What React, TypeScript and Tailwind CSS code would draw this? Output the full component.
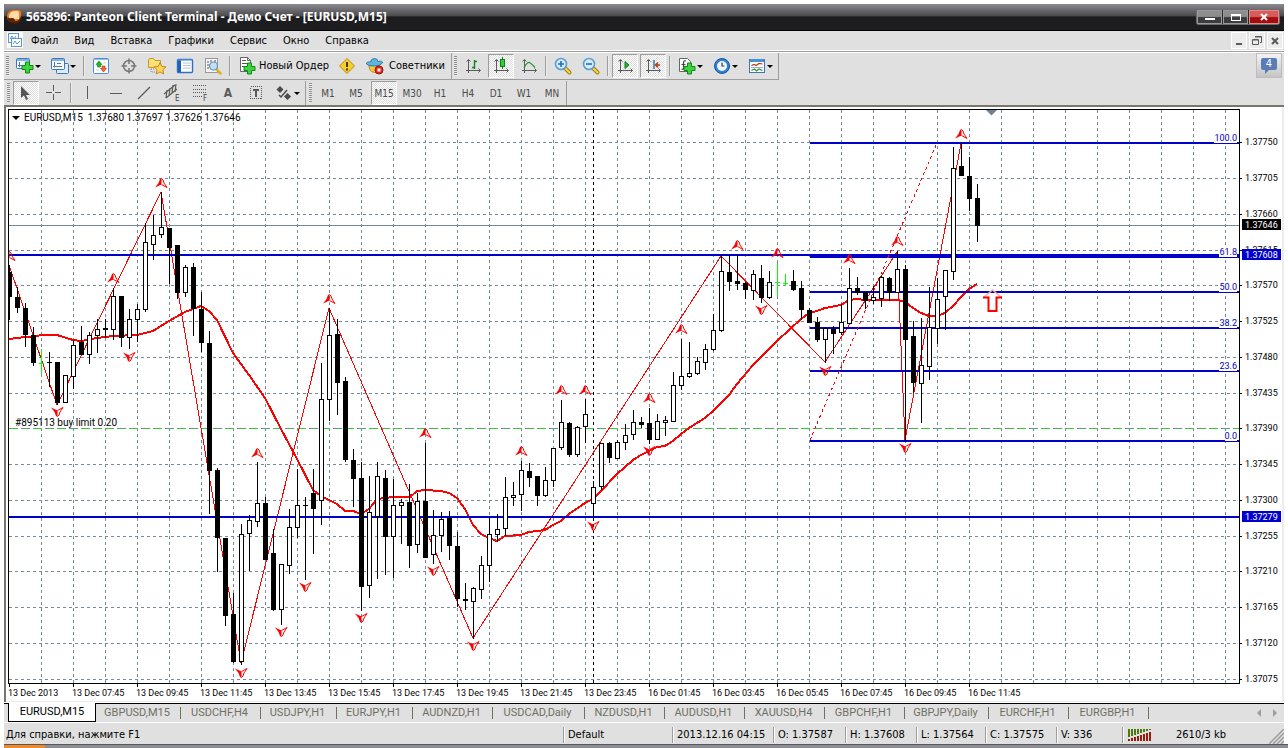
import type { ReactNode } from "react";

type Candle = [x: number, high: number, top: number, bottom: number, low: number, kind: "w" | "b" | "g"];

// pixel rows of one price bar: wick top, body top, body bottom, wick bottom
const candles: Candle[] = [
  [9, 265, 272, 297, 320, "b"],
  [17, 287, 297, 308, 313, "b"],
  [25, 303, 308, 335, 347, "b"],
  [33, 327, 335, 363, 366, "b"],
  [41, 349, 363, 364, 374, "g"],
  [49, 352, 362, 363, 387, "b"],
  [57, 362, 362, 403, 405, "b"],
  [65, 375, 375, 403, 403, "w"],
  [73, 340, 345, 377, 389, "w"],
  [81, 326, 342, 355, 355, "b"],
  [89, 332, 335, 355, 364, "w"],
  [97, 319, 329, 336, 353, "w"],
  [105, 319, 328, 330, 338, "b"],
  [113, 288, 296, 330, 340, "w"],
  [121, 296, 296, 338, 347, "b"],
  [129, 309, 319, 338, 349, "w"],
  [137, 304, 309, 320, 342, "w"],
  [145, 223, 242, 310, 312, "w"],
  [153, 215, 235, 245, 260, "w"],
  [161, 192, 227, 235, 238, "w"],
  [169, 228, 228, 248, 284, "b"],
  [177, 245, 245, 293, 299, "b"],
  [185, 265, 267, 293, 297, "w"],
  [193, 263, 267, 309, 336, "b"],
  [201, 292, 309, 343, 352, "b"],
  [209, 331, 343, 471, 514, "b"],
  [217, 468, 470, 538, 572, "b"],
  [225, 538, 538, 616, 626, "b"],
  [233, 593, 614, 662, 663, "b"],
  [241, 524, 534, 662, 665, "w"],
  [249, 515, 520, 534, 571, "w"],
  [257, 462, 503, 522, 527, "w"],
  [265, 497, 503, 560, 560, "b"],
  [273, 529, 553, 610, 611, "b"],
  [281, 564, 564, 610, 625, "w"],
  [289, 509, 527, 566, 574, "w"],
  [297, 469, 505, 528, 538, "w"],
  [305, 497, 505, 506, 580, "b"],
  [313, 469, 493, 509, 554, "b"],
  [321, 363, 399, 501, 525, "w"],
  [329, 308, 335, 400, 421, "w"],
  [337, 319, 334, 383, 415, "b"],
  [345, 377, 381, 460, 462, "b"],
  [353, 449, 460, 479, 507, "b"],
  [361, 462, 478, 587, 611, "b"],
  [369, 476, 512, 586, 598, "w"],
  [377, 462, 476, 517, 579, "w"],
  [385, 470, 478, 537, 575, "b"],
  [393, 479, 505, 537, 578, "w"],
  [401, 499, 502, 506, 544, "w"],
  [409, 484, 502, 546, 568, "b"],
  [417, 493, 501, 545, 553, "w"],
  [425, 443, 501, 558, 558, "b"],
  [433, 510, 535, 555, 564, "w"],
  [441, 512, 519, 536, 552, "w"],
  [449, 511, 518, 546, 560, "b"],
  [457, 532, 546, 599, 607, "b"],
  [465, 583, 599, 601, 610, "b"],
  [473, 587, 588, 602, 639, "w"],
  [481, 556, 565, 590, 599, "w"],
  [489, 518, 534, 566, 582, "w"],
  [497, 514, 529, 535, 542, "w"],
  [505, 477, 497, 529, 536, "w"],
  [513, 482, 495, 498, 506, "w"],
  [521, 461, 470, 495, 511, "w"],
  [529, 463, 471, 478, 487, "b"],
  [537, 476, 476, 496, 506, "b"],
  [545, 467, 480, 496, 497, "w"],
  [553, 448, 448, 481, 487, "w"],
  [561, 400, 422, 448, 450, "w"],
  [569, 422, 423, 455, 457, "b"],
  [577, 426, 427, 455, 457, "w"],
  [585, 399, 414, 427, 443, "w"],
  [593, 481, 487, 504, 517, "w"],
  [601, 443, 443, 487, 490, "w"],
  [609, 442, 443, 458, 463, "b"],
  [617, 440, 442, 459, 459, "w"],
  [625, 424, 435, 443, 450, "w"],
  [633, 410, 422, 435, 440, "w"],
  [641, 417, 422, 425, 428, "b"],
  [649, 408, 423, 440, 444, "b"],
  [657, 414, 421, 440, 440, "w"],
  [665, 416, 420, 423, 436, "w"],
  [673, 372, 385, 422, 422, "w"],
  [681, 339, 376, 386, 390, "w"],
  [689, 342, 373, 377, 378, "w"],
  [697, 357, 361, 374, 375, "w"],
  [705, 344, 349, 363, 370, "w"],
  [713, 314, 330, 350, 351, "w"],
  [721, 255, 271, 331, 332, "w"],
  [729, 255, 272, 282, 291, "b"],
  [737, 255, 281, 284, 290, "b"],
  [745, 282, 283, 290, 299, "b"],
  [753, 270, 274, 291, 300, "w"],
  [761, 265, 278, 298, 303, "b"],
  [769, 271, 282, 298, 299, "w"],
  [777, 263, 282, 283, 296, "g"],
  [785, 274, 283, 284, 286, "g"],
  [793, 270, 281, 290, 291, "b"],
  [801, 281, 288, 310, 320, "b"],
  [809, 308, 310, 323, 323, "b"],
  [817, 317, 322, 340, 342, "b"],
  [825, 327, 328, 340, 363, "w"],
  [833, 326, 329, 334, 354, "b"],
  [841, 304, 322, 333, 335, "w"],
  [849, 268, 288, 324, 324, "w"],
  [857, 277, 288, 293, 295, "b"],
  [865, 292, 292, 301, 309, "b"],
  [873, 286, 297, 301, 304, "w"],
  [881, 276, 277, 299, 307, "w"],
  [889, 277, 278, 293, 301, "b"],
  [897, 251, 269, 293, 293, "w"],
  [905, 265, 269, 340, 441, "b"],
  [913, 321, 336, 383, 393, "b"],
  [921, 318, 365, 384, 423, "w"],
  [929, 287, 327, 367, 380, "w"],
  [937, 278, 299, 329, 344, "w"],
  [945, 270, 270, 297, 330, "w"],
  [953, 147, 168, 272, 280, "w"],
  [961, 143, 166, 176, 176, "b"],
  [969, 157, 176, 199, 211, "b"],
  [977, 184, 198, 226, 242, "b"],
];

const zigzag = "9,265 57,405 161,192 241,663 329,308 473,638 721,256 825,362 897,252 905,440 961,144";

const movingAverage =
  "9,339 17,338 25,337 33,337 41,335 57,335 73,340 81,341 97,338 113,336 137,335 153,331 169,321 185,312 193,309 201,306 209,311 217,320 233,353 249,375 265,398 281,429 297,459 313,490 321,496 329,500 337,504 345,511 353,511 361,514 369,509 377,499 393,497 410,497 417,491 425,490 441,491 449,493 457,498 465,509 473,525 481,534 489,538 497,541 505,536 521,535 529,532 545,530 553,525 561,521 569,514 585,503 593,499 601,491 617,474 633,460 641,455 649,451 657,447 665,446 673,441 681,434 689,428 697,423 705,418 713,411 721,403 729,395 737,384 753,365 777,341 801,319 809,313 817,311 825,308 841,305 849,300 857,299 865,300 897,300 905,302 913,308 921,313 929,316 937,316 945,313 953,306 961,297 969,289 977,284";

const upFractals = [
  [9, 256], [113, 278], [161, 183], [257, 453], [329, 299], [425, 433], [521, 451], [561, 390],
  [585, 390], [649, 398], [681, 329], [737, 245], [777, 253], [849, 259], [897, 241], [961, 134],
];
const downFractals = [
  [57, 412], [129, 357], [241, 673], [281, 632], [305, 587], [361, 618], [433, 571], [473, 646],
  [593, 526], [649, 451], [761, 310], [825, 371], [905, 448],
];

const gridRows: [number, string][] = [
  [142, "1.37750"], [178, "1.37705"], [214, "1.37660"], [250, "1.37615"], [285, "1.37570"], [321, "1.37525"],
  [357, "1.37480"], [393, "1.37435"], [428, "1.37390"], [464, "1.37345"], [500, "1.37300"], [536, "1.37255"],
  [571, "1.37210"], [607, "1.37165"], [643, "1.37120"], [679, "1.37075"],
];
const gridColumns = Array.from({ length: 60 }, (_, i) => 41 + i * 32);

const fibo = [
  { y: 143, label: "100.0", place: "top-6" },
  { y: 257, label: "61.8", place: "top-[138px]" },
  { y: 292, label: "50.0", place: "top-[173px]" },
  { y: 328, label: "38.2", place: "top-[209px]" },
  { y: 371, label: "23.6", place: "top-[252px]" },
  { y: 441, label: "0.0", place: "top-[322px]" },
];

const timeLabels = [
  "13 Dec 2013", "13 Dec 07:45", "13 Dec 09:45", "13 Dec 11:45", "13 Dec 13:45", "13 Dec 15:45",
  "13 Dec 17:45", "13 Dec 19:45", "13 Dec 21:45", "13 Dec 23:45", "16 Dec 01:45", "16 Dec 03:45",
  "16 Dec 05:45", "16 Dec 07:45", "16 Dec 09:45", "16 Dec 11:45",
];

const CandleBar = ({ candle }: { candle: Candle }) => {
  const [x, high, top, bottom, low, kind] = candle;
  const color = kind === "g" ? "#00ff00" : "#000";
  return (
    <g>
      <rect x={x} y={high} width={1} height={low - high} fill={color} />
      {kind === "w" ? (
        <rect x={x - 1.5} y={top + 0.5} width={4} height={Math.max(bottom - top - 1, 2)} fill="#fff" stroke="#000" />
      ) : (
        <rect x={x - 2} y={top} width={5} height={bottom - top} fill={color} />
      )}
    </g>
  );
};

const Fractal = ({ x, y, down }: { x: number; y: number; down?: boolean }) => (
  <g transform={`translate(${x} ${y}) scale(1 ${down ? -1 : 1})`} stroke="#f00">
    <path d="M.5 -5 L-1 -4 L-2.500 0 L-6 4.500 L.5 1.500 Z" fill="#f00" stroke="none" />
    <path d="M.5 -4.500 L2 -3 L3 0 L6 4.500 L.5 1.500" fill="none" />
  </g>
);

const PlotArea = () => (
  <div className="relative h-[575px] min-w-0 flex-1 overflow-hidden border border-black bg-white">
    <svg className="block h-full w-full" role="img" aria-label="EURUSD,M15">
      <g transform="translate(-9 -110)">
        <g stroke="#778899" strokeDasharray="3 3" shapeRendering="crispEdges">
          {gridColumns.map((x) => (
            <line key={x} x1={x + 0.5} x2={x + 0.5} y1={110} y2={683} />
          ))}
          {gridRows.map(([y]) => (
            <line key={y} x1={9} x2={3000} y1={y + 0.5} y2={y + 0.5} />
          ))}
        </g>
        <g shapeRendering="crispEdges">
          <line x1={593.5} x2={593.5} y1={110} y2={683} stroke="#000" strokeDasharray="3 3" />
          <line x1={9} x2={3000} y1={225.5} y2={225.5} stroke="#778899" />
          <line x1={9} x2={3000} y1={428.5} y2={428.5} stroke="#32cd32" strokeDasharray="9 6 3 6" />
        </g>
        <polyline points={zigzag} fill="none" stroke="#f00" shapeRendering="crispEdges" />
        <polyline points={movingAverage} fill="none" stroke="#f00" strokeWidth="2" shapeRendering="crispEdges" />
        <g fill="#0000cd" shapeRendering="crispEdges">
          <rect x={9} y={254} width={3000} height={2} />
          <rect x={9} y={516} width={3000} height={2} />
          {fibo.map(({ y }) => (
            <rect key={y} x={810} y={y - 1} width={3000} height={2} />
          ))}
        </g>
        <line x1={810} y1={440} x2={937} y2={143} stroke="#f00" strokeDasharray="3 3" shapeRendering="crispEdges" />
        <g shapeRendering="crispEdges">
          {candles.map((candle) => (
            <CandleBar key={candle[0]} candle={candle} />
          ))}
        </g>
        {upFractals.map(([x, y]) => (
          <Fractal key={x} x={x} y={y} />
        ))}
        {downFractals.map(([x, y]) => (
          <Fractal key={x} x={x} y={y} down />
        ))}
        <path d="M986 110 H997 L991.500 115.500 Z" fill="#708090" />
        {/* buy signal */}
        <path d="M984 297 L992.500 290 L1001 297" fill="none" stroke="#f9a8a8" strokeWidth="1.500" />
        <path d="M983 297.500 H988.500 V311 H996.500 V297.500 H1002" fill="none" stroke="#f00" strokeWidth="2" />
      </g>
    </svg>
    <div className="absolute left-[3px] top-0.5 flex items-center gap-1 text-[10px] leading-3">
      <span className="border-x-4 border-t-4 border-x-transparent border-t-black" />
      <span className="whitespace-pre">EURUSD,M15  1.37680 1.37697 1.37626 1.37646</span>
    </div>
    <span className="absolute left-1.5 top-[307px] text-[10px] leading-3">#895113 buy limit 0.20</span>
    {fibo.map(({ label, place }) => (
      <span key={label} className={`absolute right-0.5 bg-white text-[9px] leading-[9px] text-[#0000cd] ${place}`}>
        {label}
      </span>
    ))}
  </div>
);

const PriceTag = ({ y, value, fill }: { y: number; value: string; fill: string }) => (
  <g>
    <rect x={2} y={y - 6} width={39} height={11} fill={fill} />
    <text x={5} y={y + 3} fill="#fff">{value}</text>
  </g>
);

const PriceScale = () => (
  <svg className="block h-[575px] w-[42px] shrink-0 text-[9px]">
    <g transform="translate(0 -109)">
      {gridRows.map(([y, price]) => (
        <g key={price}>
          <rect x={0} y={y} width={2} height={1} />
          <text x={5} y={y + 3}>{price}</text>
        </g>
      ))}
      <PriceTag y={225} value="1.37646" fill="#000" />
      <PriceTag y={255} value="1.37608" fill="#0000cd" />
      <PriceTag y={517} value="1.37279" fill="#0000cd" />
    </g>
  </svg>
);

const ChartPanel = () => (
  <section className="border-l-2 border-t-2 border-l-[#77776f] border-t-[#77776f] bg-white font-['Roboto',sans-serif] text-black">
    <div className="border-b border-r-2 border-[#ececec] pl-0.5 pt-0.5">
      <div className="flex">
        <PlotArea />
        <PriceScale />
      </div>
      <svg className="block h-[17px] w-full text-[9px]">
        {timeLabels.map((label, i) => (
          <g key={label}>
            <rect x={i * 64 + 1} y={0} width={1} height={3} />
            <text x={i * 64} y={12}>{label}</text>
          </g>
        ))}
      </svg>
    </div>
  </section>
);

const Icon = ({ children }: { children: ReactNode }) => (
  <svg viewBox="0 0 20 20" className="size-5 shrink-0" fill="none" aria-hidden="true">
    {children}
  </svg>
);

const Plus = ({ x, y }: { x: number; y: number }) => (
  <path
    transform={`translate(${x} ${y})`}
    d="M4 .5 H8 V4 H11.500 V8 H8 V11.500 H4 V8 H.5 V4 H4 Z"
    fill="#3fd43f"
    stroke="#0a8a12"
  />
);

const Axes = () => (
  <path d="M5.500 4 V17 M3.500 5.500 L5.500 3.500 L7.500 5.500 M3 14.500 H17 M15.500 12.500 L17.500 14.500 L15.500 16.500" stroke="#5a5a5a" />
);

const NewChartIcon = () => (
  <Icon>
    <rect x="1.500" y="2.500" width="13" height="10" rx="1" fill="#eef6ff" stroke="#3f76b5" />
    <path d="M2 4 H14" stroke="#7fb2e5" strokeWidth="2" />
    <path d="M4.500 6 V11 M3 9.500 H12" stroke="#54779d" />
    <Plus x={6.5} y={5.5} />
  </Icon>
);
const ProfilesIcon = () => (
  <Icon>
    <rect x="6.500" y="7.500" width="12" height="10" rx="1" fill="#dcebfa" stroke="#3f76b5" />
    <rect x="1.500" y="2.500" width="13" height="11" rx="1" fill="#f3f9ff" stroke="#3f76b5" />
    <path d="M2 4 H14" stroke="#7fb2e5" strokeWidth="2" />
    <path d="M4.500 6 V11.500 M3 10.500 H12 M7 7.500 H11" stroke="#54779d" />
  </Icon>
);
const MarketWatchIcon = () => (
  <Icon>
    <rect x="2.500" y="2.500" width="15" height="15" rx="1" fill="#fff" stroke="#4a90d9" />
    <path d="M3 3.500 H17" stroke="#8fbfee" />
    <path d="M5 14 H8 M12 7 H15" stroke="#cfd6dd" />
    <path d="M8 5 L11 8.500 H9.500 V11 H6.500 V8.500 H5 Z" fill="#22b422" stroke="#0b7d12" strokeWidth=".6" />
    <path d="M12.500 16 L9.500 12.500 H11 V10 H14 V12.500 H15.500 Z" fill="#f2683a" stroke="#b7300c" strokeWidth=".6" />
  </Icon>
);
const DataWindowIcon = () => (
  <Icon>
    <circle cx="10" cy="10" r="5.500" stroke="#777" strokeWidth="1.500" />
    <path d="M10 2.500 V8 M10 12 V17.500 M2.500 10 H8 M12 10 H17.500" stroke="#777" strokeWidth="1.500" />
  </Icon>
);
const NavigatorIcon = () => (
  <Icon>
    <path d="M1.500 4 L2.500 2.500 H6.500 L8 4.500 H13.500 V11.500 H1.500 Z" fill="#fbe07a" stroke="#c39a1b" />
    <path d="M4 13 H8 M4 13 V16 H8" stroke="#8a8a8a" strokeDasharray="1 1" />
    <path d="M13 6.500 L14.800 10.400 L19 10.900 L15.900 13.800 L16.700 18 L13 15.900 L9.300 18 L10.100 13.800 L7 10.900 L11.200 10.400 Z" fill="#ffd65a" stroke="#c48a16" />
  </Icon>
);
const TerminalIcon = () => (
  <Icon>
    <rect x="2.500" y="3.500" width="15" height="13" rx="1" fill="#fff" stroke="#2f6fc0" strokeWidth="1.400" />
    <path d="M4.500 4 V16" stroke="#1f5fb5" strokeWidth="3" />
    <path d="M3 4 H17" stroke="#5d9be0" />
    <path d="M8 7 H16 M8 9.500 H16 M8 12 H16" stroke="#b8c6d6" />
  </Icon>
);
const TesterIcon = () => (
  <Icon>
    <rect x="2.500" y="2.500" width="12" height="14" fill="#f6f6f6" stroke="#9a9a9a" />
    <path d="M5 5 V14 M8 4 V9 M12 4 V8" stroke="#555" strokeDasharray="2 1" />
    <path d="M13.500 13.500 L17.500 17.500" stroke="#e0b020" strokeWidth="2.500" strokeLinecap="round" />
    <circle cx="10.500" cy="10" r="4" fill="#bfe0f8" stroke="#6e93b2" strokeWidth="1.200" />
  </Icon>
);
const NewOrderIcon = () => (
  <Icon>
    <path d="M3.500 1.500 H10.500 L13.500 4.500 V15.500 H3.500 Z" fill="#fff" stroke="#666" />
    <path d="M10.500 1.500 V4.500 H13.500" stroke="#666" />
    <path d="M5 4.500 H9 M5 7.500 H12 M5 10.500 H8" stroke="#555" />
    <Plus x={6.5} y={6.5} />
  </Icon>
);
const MetaEditorIcon = () => (
  <Icon>
    <path d="M10 2.500 L17.500 10 L10 17.500 L2.500 10 Z" fill="#f7cf2c" stroke="#b98a08" strokeLinejoin="round" />
    <path d="M10 6 V11 M10 12.500 V14.500" stroke="#4a3a00" strokeWidth="2" />
  </Icon>
);
const AdvisorsIcon = () => (
  <Icon>
    <path d="M4 9 Q4 16 9.500 16.500 Q15 16 15 9 Z" fill="#f8c93c" stroke="#bd8d12" />
    <path d="M1.500 8 Q1 5.500 5.500 6 Q6 2.500 9.500 2.500 Q12.500 2.500 13 5.500 Q18 4.500 17.500 7 Q15 10 9 10 Q3 10 1.500 8 Z" fill="#62b4e0" stroke="#2b7dab" />
    <circle cx="14" cy="14" r="4" fill="#dd2a1c" stroke="#a01208" />
    <rect x="12.500" y="12.500" width="3" height="3" fill="#fff" />
  </Icon>
);
const BarsIcon = () => (
  <Icon>
    <Axes />
    <path d="M11.500 4 V13 M9 11.500 H11.500 M11.500 5.500 H14" stroke="#11881a" strokeWidth="1.400" />
  </Icon>
);
const CandlesIcon = () => (
  <Icon>
    <Axes />
    <path d="M11.500 1 V13" stroke="#11881a" />
    <rect x="9.500" y="3.500" width="4" height="7" fill="#2fd03a" stroke="#0f7f18" />
  </Icon>
);
const LineIcon = () => (
  <Icon>
    <Axes />
    <path d="M5 12 Q8 6 10.500 6.500 Q13 8 16 11.500" stroke="#2d9a38" strokeWidth="1.300" />
  </Icon>
);
const ZoomIcon = ({ zoomIn }: { zoomIn?: boolean }) => (
  <Icon>
    <path d="M12 12 L16.500 16.500" stroke="#a87a10" strokeWidth="4" strokeLinecap="round" />
    <path d="M12.500 12.500 L16.500 16.500" stroke="#f6d648" strokeWidth="2" strokeLinecap="round" />
    <circle cx="8" cy="8" r="5.500" fill="#d3ecfc" stroke="#5c9ed2" strokeWidth="1.600" />
    <path d={zoomIn ? "M5 8 H11 M8 5 V11" : "M5 8 H11"} stroke="#2a6fae" strokeWidth="1.600" />
  </Icon>
);
const AutoScrollIcon = () => (
  <Icon>
    <Axes />
    <path d="M10 5.500 L14 9 L10 12.500 Z" fill="#22b92c" stroke="#0d7c16" />
  </Icon>
);
const ChartShiftIcon = () => (
  <Icon>
    <Axes />
    <path d="M11 4 V13" stroke="#2a6fae" strokeWidth="1.400" />
    <path d="M17 9 H13 M15 6.500 L12.500 9 L15 11.500" stroke="#b53a14" strokeWidth="1.500" />
  </Icon>
);
const IndicatorsIcon = () => (
  <Icon>
    <path d="M2.500 2.500 H10.500 L13.500 5.500 V15.500 H2.500 Z" fill="#fff" stroke="#666" />
    <path d="M9 5 Q6.500 4 6.500 7 V12 Q6.500 14 4.500 13 M4.500 8.500 H8.500" stroke="#444" strokeWidth="1.200" />
    <Plus x={6.5} y={6.5} />
  </Icon>
);
const PeriodsIcon = () => (
  <Icon>
    <circle cx="10" cy="10" r="7.500" fill="#2f7fd6" stroke="#1556a3" />
    <circle cx="10" cy="10" r="5" fill="#f4faff" />
    <path d="M10 6.500 V10 H12.500" stroke="#1d3f66" strokeWidth="1.200" />
  </Icon>
);
const TemplatesIcon = () => (
  <Icon>
    <rect x="2.500" y="3.500" width="15" height="13" fill="#fff" stroke="#3f76b5" />
    <path d="M3 4.500 H17" stroke="#4a90d9" strokeWidth="3" />
    <path d="M4.500 9.500 L7 8.500 L9 9.500 L12 7.500 L15.500 8" stroke="#a8401c" strokeWidth="1.200" />
    <path d="M4 11.500 H16" stroke="#9cb4cc" />
    <path d="M4.500 14.500 L7.500 13 L9.500 15 L12 13 L15.500 14.500" stroke="#2f8f35" strokeWidth="1.200" />
  </Icon>
);

const CursorIcon = () => (
  <Icon>
    <path d="M5 3 V15 L8 12.500 L10 17 L12 16 L10 12 H14 Z" fill="#555" />
  </Icon>
);
const CrossIcon = () => (
  <Icon>
    <path d="M9.500 2 V8 M9.500 11 V17 M2 9.500 H8 M11 9.500 H17" stroke="#5a5a5a" />
  </Icon>
);
const VerticalIcon = () => (
  <Icon>
    <path d="M9.500 3 V16" stroke="#5a5a5a" />
  </Icon>
);
const HorizontalIcon = () => (
  <Icon>
    <path d="M4 10.500 H16" stroke="#5a5a5a" />
  </Icon>
);
const TrendIcon = () => (
  <Icon>
    <path d="M4 16 L16 4" stroke="#5a5a5a" strokeWidth="1.200" />
  </Icon>
);
const ChannelIcon = () => (
  <Icon>
    <path d="M2 11 L13 2 M4 15 L15 6 M5 7 L4 15 M8 5 L7 13 M11 2 L10 10 M14 1 L13 9" stroke="#5a5a5a" strokeWidth="1.200" />
    <text x="13" y="18" fill="#444" className="text-[8px]">E</text>
  </Icon>
);
const FiboIcon = () => (
  <Icon>
    <path d="M3 2.500 H17 M3 6.500 H17 M3 9.500 H17 M3 13.500 H12" stroke="#5a5a5a" strokeDasharray="1 1" />
    <text x="13" y="18" fill="#444" className="text-[8px]">F</text>
  </Icon>
);
const TextLabelIcon = () => (
  <Icon>
    <rect x="4.500" y="3.500" width="11" height="12" stroke="#5a5a5a" strokeDasharray="1 1" shapeRendering="crispEdges" />
    <path d="M7 7 H13 M10 7 V14" stroke="#5a5a5a" strokeWidth="2" />
  </Icon>
);
const ArrowsIcon = () => (
  <Icon>
    <path d="M6 3 L9.500 6.500 L6 10 L2.500 6.500 Z" fill="#4a4a4a" />
    <path d="M13.500 10 L17 13.500 L13.500 17 L10 13.500 Z" fill="#4a4a4a" />
    <path d="M5 12 L7 14 L13 7" stroke="#4a4a4a" strokeWidth="1.500" />
  </Icon>
);

const PRESSED =
  "border-[#9d9d9d] border-b-white border-r-white bg-[conic-gradient(#fff_25%,#dedede_0_50%,#fff_0_75%,#dedede_0)] bg-size-[2px_2px]";

type ToolProps = { label: string; pressed?: boolean; children: ReactNode };

const Tool = ({ label, pressed, children }: ToolProps) => (
  <button
    type="button"
    aria-label={label}
    aria-pressed={pressed}
    className={`mx-px flex h-6 w-[26px] items-center justify-center border ${pressed ? PRESSED : "border-transparent"}`}
  >
    {children}
  </button>
);

const MenuTool = ({ label, children }: ToolProps) => (
  <button type="button" aria-label={label} className="flex h-6 w-[35px] items-center pl-1">
    {children}
    <span className="border-x-3 border-t-3 border-x-transparent border-t-black" />
  </button>
);

const Grip = () => (
  <span className="mx-0.5 h-5 w-[3px] bg-[repeating-linear-gradient(#8f8f8f_0_1px,#e8e8e8_1px_2px)]" />
);

const Divider = () => <span className="mx-0.5 h-5 w-0.5 border-l border-r border-l-[#9d9d9d] border-r-[#ececec]" />;

const Toolbars = () => (
  <div className="bg-[#e0e0e0]">
    <div className="flex">
      <div className="flex h-[27px] items-center border-b border-r border-[#9d9d9d]">
        <Grip />
        <MenuTool label="Новый график"><NewChartIcon /></MenuTool>
        <MenuTool label="Профили"><ProfilesIcon /></MenuTool>
        <Divider />
        <Tool label="Обзор рынка"><MarketWatchIcon /></Tool>
        <Tool label="Окно данных"><DataWindowIcon /></Tool>
        <Tool label="Навигатор"><NavigatorIcon /></Tool>
        <Tool label="Терминал"><TerminalIcon /></Tool>
        <Tool label="Тестер стратегий"><TesterIcon /></Tool>
        <Divider />
        <button type="button" className="flex h-6 w-[100px] items-center gap-0.5 whitespace-nowrap pl-1">
          <NewOrderIcon />
          Новый Ордер
        </button>
        <Tool label="MetaEditor"><MetaEditorIcon /></Tool>
        <button type="button" className="flex h-6 w-[90px] items-center gap-1 whitespace-nowrap pl-1">
          <AdvisorsIcon />
          Советники
        </button>
      </div>
      <div className="flex h-[27px] items-center border-b border-r border-[#9d9d9d]">
        <Grip />
        <Tool label="Бары"><BarsIcon /></Tool>
        <Tool label="Свечи" pressed><CandlesIcon /></Tool>
        <Tool label="Линия"><LineIcon /></Tool>
        <Divider />
        <Tool label="Увеличить"><ZoomIcon zoomIn /></Tool>
        <Tool label="Уменьшить"><ZoomIcon /></Tool>
        <Divider />
        <Tool label="Автопрокрутка" pressed><AutoScrollIcon /></Tool>
        <Tool label="Сдвиг графика" pressed><ChartShiftIcon /></Tool>
        <Divider />
        <MenuTool label="Индикаторы"><IndicatorsIcon /></MenuTool>
        <MenuTool label="Периоды"><PeriodsIcon /></MenuTool>
        <MenuTool label="Шаблоны"><TemplatesIcon /></MenuTool>
      </div>
      <button
        type="button"
        className="ml-auto mr-0.5 flex h-[25px] w-[26px] items-start justify-center border border-[#bdbdbd] bg-linear-to-b from-[#f4f4f4] to-[#c4c4c4] pt-1"
      >
        <span className="relative h-3 w-4 rounded-xs bg-[#5b7bb4] text-[11px] leading-3 text-white">
          4
          <span className="absolute left-1 top-3 border-r-4 border-t-4 border-r-transparent border-t-[#5b7bb4]" />
        </span>
      </button>
    </div>
    <div className="flex h-[25px] items-center pt-px text-[#4a4a4a]">
      <div className="flex h-full items-center border-r border-[#9d9d9d] pl-px">
        <Grip />
        <Tool label="Курсор" pressed><CursorIcon /></Tool>
        <Tool label="Перекрестие"><CrossIcon /></Tool>
        <Divider />
        <Tool label="Вертикальная линия"><VerticalIcon /></Tool>
        <Tool label="Горизонтальная линия"><HorizontalIcon /></Tool>
        <Tool label="Трендовая линия"><TrendIcon /></Tool>
        <Tool label="Канал"><ChannelIcon /></Tool>
        <Tool label="Линии Фибоначчи"><FiboIcon /></Tool>
        <Tool label="Текст"><span className="text-[12px] font-bold text-[#5a5a5a]">A</span></Tool>
        <Tool label="Метка"><TextLabelIcon /></Tool>
        <MenuTool label="Стрелки"><ArrowsIcon /></MenuTool>
      </div>
      <div className="flex h-full items-center border-r border-[#9d9d9d] pl-px">
        <Grip />
        {["M1", "M5", "M15", "M30", "H1", "H4", "D1", "W1", "MN"].map((period) => (
          <Tool key={period} label={period} pressed={period === "M15"}>
            <span className="text-[10px]">{period}</span>
          </Tool>
        ))}
      </div>
    </div>
  </div>
);

const CAPTION_BUTTON =
  "flex h-3.5 items-center justify-center border border-[#9a9a9a] bg-linear-to-b from-[#8d8d90] from-45% to-[#3c3c3f] to-55%";

const TitleBar = () => (
  <header className="flex h-[27px] items-center border-b border-black bg-linear-to-b from-[#8c8c90] via-[#4c4c50] via-45% to-[#1d1d1f] to-50% pl-0.5 pr-[5px] text-white">
    <svg viewBox="0 0 18 18" className="size-[18px]" aria-hidden="true">
      <path d="M1 9 Q1 2 8 2 H13 Q16 3 15 9 Q13 14 7 14 Q1 14 1 9 Z" fill="#f07818" />
      <path d="M3 8 Q4 3 9 3 H12 Q14 5 13 8 V11 H8 Q6 9 3 10 Z" fill="#ffdcae" />
      <path d="M1 9 Q3 11 6 10 Q9 10 9 13 Q14 13 15 8 Q16 15 9 15.500 Q2 16 1 9 Z" fill="#5a2408" />
    </svg>
    <h1 className="ml-0.5 font-['Noto_Sans',sans-serif] text-[12px] font-bold">
      565896: Panteon Client Terminal - Демо Счет - [EURUSD,M15]
    </h1>
    <div className="ml-auto flex gap-px rounded-xs bg-[#2a2a2c] ring-1 ring-[#6c6c70]">
      <button type="button" aria-label="Свернуть" className={`w-[25px] ${CAPTION_BUTTON}`}>
        <span className="mt-1 h-0.5 w-2.5 bg-white" />
      </button>
      <button type="button" aria-label="Развернуть" className={`w-[25px] ${CAPTION_BUTTON}`}>
        <span className="h-[7px] w-2.5 border border-t-2 border-white" />
      </button>
      <button
        type="button"
        aria-label="Закрыть"
        className="flex h-3.5 w-[30px] items-center justify-center border border-[#e08a8a] bg-linear-to-b from-[#d95c5c] from-45% to-[#a30d0d] to-55%"
      >
        <svg viewBox="0 0 8 8" className="size-2" stroke="#fff" strokeWidth="2">
          <path d="M1 1 L7 7 M7 1 L1 7" />
        </svg>
      </button>
    </div>
  </header>
);

const MDI_BUTTON = "flex h-[17px] w-4 items-center justify-center border border-white bg-[#ececec]";

const MenuBar = () => (
  <nav className="flex h-[22px] items-start border-b border-white bg-[#e0e0e0] shadow-[inset_0_-1px_#9d9d9d,inset_0_-2px_#fff]">
    <svg viewBox="0 0 16 16" className="ml-[3px] mt-px size-4" fill="none" aria-hidden="true">
      <rect width="16" height="16" fill="#fff" />
      <rect x="1.500" y="1.500" width="10" height="9" stroke="#5c95dc" />
      <path d="M3 7 L5 4 L7 7 L9 4" stroke="#5c95dc" />
      <rect x="4.500" y="6.500" width="10" height="8" fill="#fff" stroke="#5c95dc" />
      <path d="M6 12 L8 9 L10 12 L13 9" stroke="#5c95dc" />
    </svg>
    {["Файл", "Вид", "Вставка", "Графики", "Сервис", "Окно", "Справка"].map((item) => (
      <button key={item} type="button" className="h-5 px-2 pt-px">{item}</button>
    ))}
    <div className="ml-auto mr-px mt-px flex gap-0.5">
      <button type="button" aria-label="Свернуть окно" className={MDI_BUTTON}>
        <span className="mt-1.5 h-0.5 w-1.5 bg-[#5a5a5a]" />
      </button>
      <button type="button" aria-label="Восстановить окно" className={MDI_BUTTON}>
        <svg viewBox="0 0 10 10" className="size-2.5" fill="none" stroke="#5a5a5a">
          <path d="M3 1 H9.500 V6.500 H8 M3 0.500 H9.500 V2" />
          <path d="M0.500 4 H6.500 V8.500 H0.500 Z M0.500 3.500 H6.500" />
        </svg>
      </button>
      <button type="button" aria-label="Закрыть окно" className={MDI_BUTTON}>
        <svg viewBox="0 0 8 8" className="size-2" stroke="#5a5a5a" strokeWidth="2">
          <path d="M1 1 L7 7 M7 1 L1 7" />
        </svg>
      </button>
    </div>
  </nav>
);

const chartTabs = [
  { name: "GBPUSD,M15", width: "w-[85px]" },
  { name: "USDCHF,H4", width: "w-20" },
  { name: "USDJPY,H1", width: "w-[76px]" },
  { name: "EURJPY,H1", width: "w-[76px]" },
  { name: "AUDNZD,H1", width: "w-20" },
  { name: "USDCAD,Daily", width: "w-[92px]" },
  { name: "NZDUSD,H1", width: "w-20" },
  { name: "AUDUSD,H1", width: "w-20" },
  { name: "XAUUSD,H4", width: "w-20" },
  { name: "GBPCHF,H1", width: "w-20" },
  { name: "GBPJPY,Daily", width: "w-[84px]" },
  { name: "EURCHF,H1", width: "w-20" },
  { name: "EURGBP,H1", width: "w-20" },
];

const ChartTabs = () => (
  <div className="mt-px flex h-5 items-start border-b border-white bg-[#e0e0e0] font-['Roboto',sans-serif] shadow-[inset_0_1px_#000]">
    <button type="button" className="ml-1 h-[19px] w-[88px] border border-t-0 border-black bg-white">EURUSD,M15</button>
    {chartTabs.map(({ name, width }) => (
      <button key={name} type="button" className={`mt-1 h-3 border-r border-[#6f6f66] pr-0.5 leading-3 text-[#6f6f66] ${width}`}>
        {name}
      </button>
    ))}
    <div className="ml-auto mr-[7px] mt-1.5 flex gap-3">
      <button type="button" aria-label="Влево" className="border-y-4 border-r-4 border-y-transparent border-r-[#9d9d9d]" />
      <button type="button" aria-label="Вправо" className="border-y-4 border-l-4 border-y-transparent border-l-[#9d9d9d]" />
    </div>
  </div>
);

const statusCells = [
  { text: "Default", width: "w-[109px]" },
  { text: "2013.12.16 04:15", width: "w-[101px]" },
  { text: "O: 1.37587", width: "w-[72px]" },
  { text: "H: 1.37608", width: "w-[71px]" },
  { text: "L: 1.37564", width: "w-[69px]" },
  { text: "C: 1.37575", width: "w-[71px]" },
  { text: "V: 336", width: "w-[66px]" },
];

const StatusBar = () => (
  <footer className="relative flex h-[21px] items-center bg-[#e0e0e0] pt-[3px]">
    <span className="flex-1 pl-0.5">Для справки, нажмите F1</span>
    {statusCells.map(({ text, width }) => (
      <span key={text} className={`h-4 whitespace-nowrap border-l border-[#9d9d9d] pl-1 leading-4 shadow-[inset_1px_0_#fff] ${width}`}>
        {text}
      </span>
    ))}
    <div className="flex h-4 w-[162px] items-center gap-6 border-l border-[#9d9d9d] pl-[5px] shadow-[inset_1px_0_#fff]">
      <svg viewBox="0 0 24 12" className="h-3 w-6" shapeRendering="crispEdges" aria-hidden="true">
        {Array.from({ length: 8 }, (_, i) => (
          <g key={i}>
            <rect x={i * 3} y={0} width={2} height={8 - i} fill="#4f7a0a" />
            <rect x={i * 3} y={10 - i} width={2} height={2 + i} fill="#9a1c08" />
          </g>
        ))}
      </svg>
      2610/3 kb
    </div>
    <svg viewBox="0 0 15 15" className="absolute bottom-0 right-0 size-[15px]" stroke="#9d9d9d" strokeWidth="1.500" aria-hidden="true">
      <path d="M0 15 L15 0 M4 15 L15 4 M8 15 L15 8 M12 15 L15 12" />
    </svg>
  </footer>
);

const App = () => (
  <main className="bg-white px-1 pt-1 font-['DejaVu_Sans_Condensed','Noto_Sans',sans-serif] text-[11px] text-black">
    <TitleBar />
    <MenuBar />
    <Toolbars />
    <ChartPanel />
    <ChartTabs />
    <StatusBar />
    <div className="-mr-1 h-1 border-t border-[#55555a] bg-[#8d8d95]">
      <div className="h-full w-[41px] bg-[#f08a28]" />
    </div>
  </main>
);

export default App;
